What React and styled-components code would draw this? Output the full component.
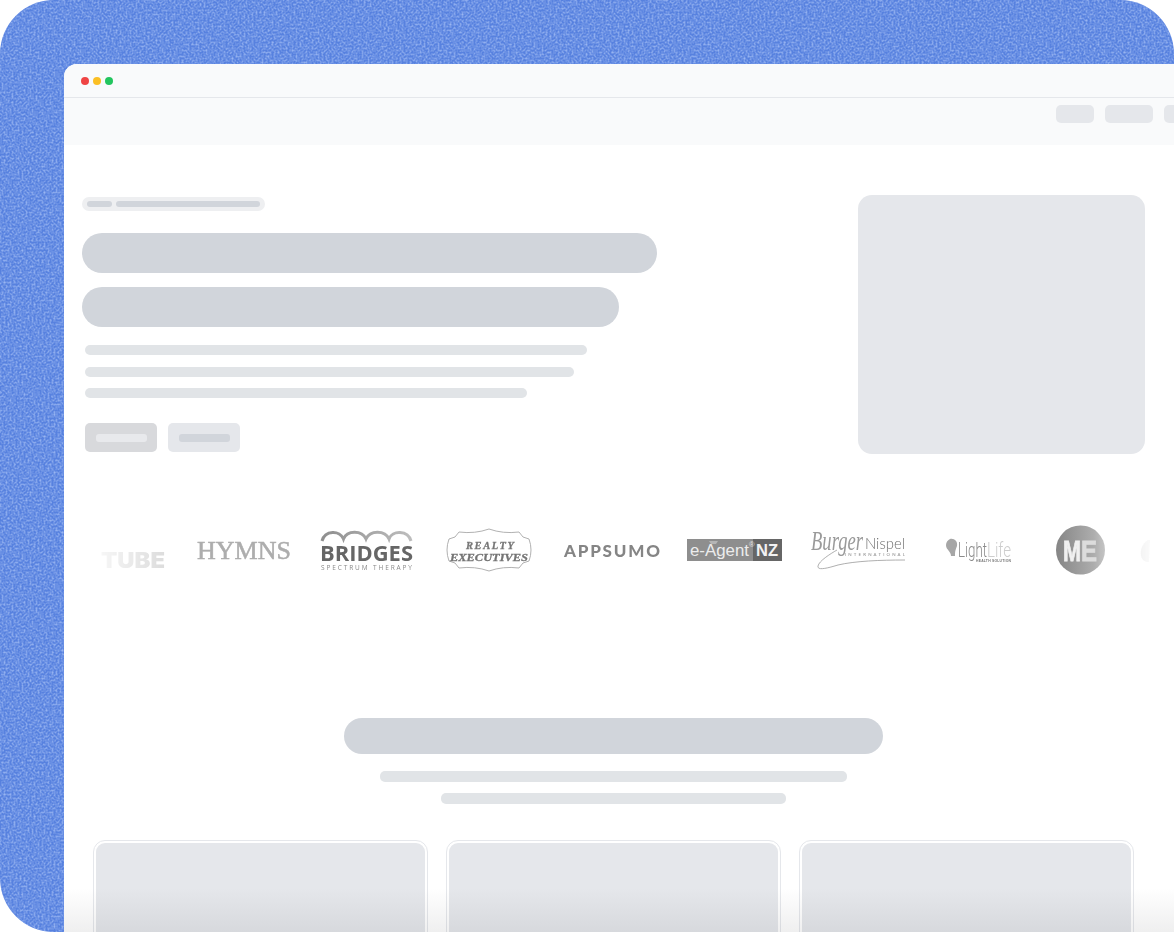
import React from "react";
import styled, { createGlobalStyle } from "styled-components";

const Global = createGlobalStyle`
  html, body { margin: 0; padding: 0; background: #fff; }
  body { font-family: "Liberation Sans", Arial, sans-serif; overflow: hidden; }
`;

const Stage = styled.div`
  position: relative;
  width: 1174px;
  height: 932px;
  padding: 64px 0 0 64px;
  box-sizing: border-box;
  border-radius: 54px 54px 0 54px;
  overflow: hidden;
  background: #5781df;
`;

const Noise = styled.svg`
  position: absolute;
  inset: 0;
  width: 100%;
  height: 100%;
`;

const Browser = styled.div`
  position: relative;
  height: 868px;
  background: #fff;
  border-top-left-radius: 13px;
  overflow: hidden;
`;

const TitleBar = styled.div`
  height: 34px;
  box-sizing: border-box;
  padding-left: 17px;
  display: flex;
  align-items: center;
  gap: 4px;
  background: #f9fafb;
  border-bottom: 1px solid #e5e7eb;
`;

const Dot = styled.span`
  width: 8px;
  height: 8px;
  border-radius: 50%;
  background: ${(p) => p.$color};
`;

const NavBar = styled.div`
  height: 47px;
  box-sizing: border-box;
  padding-top: 7px;
  display: flex;
  justify-content: flex-end;
  align-items: flex-start;
  gap: 11px;
  margin-right: -28px;
  background: #f9fafb;
`;

const NavButton = styled.div`
  width: ${(p) => p.$w}px;
  height: 18px;
  border-radius: 5px;
  background: #e5e7eb;
`;

const Hero = styled.section`
  display: flex;
  justify-content: space-between;
  padding: 50px 29px 0 18px;
`;

const HeroText = styled.div`
  width: 575px;
  padding-top: 2px;
`;

const Crumbs = styled.div`
  width: 183px;
  height: 14px;
  box-sizing: border-box;
  padding: 0 5px;
  display: flex;
  align-items: center;
  gap: 4px;
  border-radius: 7px;
  background: #eeeff1;
  margin-bottom: 22px;
`;

const CrumbBar = styled.div`
  height: 6px;
  border-radius: 3px;
  width: ${(p) => p.$w}px;
  background: #d1d5db;
`;

const Heading = styled.div`
  width: ${(p) => p.$w}px;
  height: 40px;
  border-radius: 20px;
  background: #d1d5db;
  margin-bottom: 14px;
`;

const Lines = styled.div`
  padding: 4px 0 0 3px;
  display: flex;
  flex-direction: column;
  gap: 11.5px;
`;

const TextLine = styled.div`
  width: ${(p) => p.$w}px;
  height: 10px;
  border-radius: 5px;
  background: #e1e4e7;
`;

const Actions = styled.div`
  display: flex;
  gap: 11px;
  margin: 25px 0 0 3px;
`;

const ActionButton = styled.div`
  width: 72px;
  height: 29px;
  border-radius: 5px;
  display: flex;
  align-items: center;
  justify-content: center;
  background: ${(p) => (p.$primary ? "#d8d9dc" : "#e5e7eb")};
`;

const ActionLabel = styled.div`
  width: 51px;
  height: 8px;
  border-radius: 3px;
  background: ${(p) => (p.$primary ? "#e8e9ec" : "#d1d5db")};
`;

const HeroImage = styled.div`
  width: 287.5px;
  height: 259px;
  border-radius: 14px;
  background: #e5e7eb;
`;

const LogoTrack = styled.div`
  display: flex;
  align-items: flex-start;
  height: 60px;
  margin-top: 66px;
  padding-left: 37px;
  overflow: hidden;
  filter: blur(0.4px);
  mask-image: linear-gradient(to right, transparent 15px, #000 135px, #000 1030px, transparent 1095px);
`;

const Logo = styled.svg`
  flex: none;
  overflow: visible;
  margin-left: ${(p) => p.$gap || 0}px;
`;

const Section = styled.section`
  width: 1099px;
  margin-top: 138px;
  display: flex;
  flex-direction: column;
  align-items: center;
`;

const SectionTitle = styled.div`
  width: 539px;
  height: 36px;
  border-radius: 18px;
  background: #d1d5db;
  margin-bottom: 17px;
`;

const SectionLine = styled.div`
  width: ${(p) => p.$w}px;
  height: 11px;
  border-radius: 5px;
  background: #e1e4e7;
  margin-bottom: 11px;
`;

const Cards = styled.div`
  display: grid;
  grid-template-columns: repeat(3, 334.5px);
  gap: 18.5px;
  margin: 25px 0.5px 0 0;
`;

const Card = styled.div`
  height: 200px;
  box-sizing: border-box;
  padding: 2px;
  border: 1px solid #e5e7eb;
  border-radius: 12px;
  background: #fff;
`;

const CardFill = styled.div`
  height: 100%;
  border-radius: 9px;
  background: #e5e7eb;
`;

const BottomFade = styled.div`
  position: absolute;
  left: 0;
  right: 0;
  bottom: 0;
  height: 44px;
  background: linear-gradient(to bottom, rgba(50, 50, 55, 0), rgba(50, 50, 55, 0.08));
`;

const sans = "'Liberation Sans', sans-serif";
const serif = "'Liberation Serif', serif";

const TubeLogo = ({ gap }) => (
  <Logo $gap={gap} width="64" height="60" viewBox="0 0 64 60">
    <text x="0" y="47.5" fontFamily="Inter, sans-serif" fontWeight="900" fontSize="21.5" textLength="64" lengthAdjust="spacingAndGlyphs" fill="#cfcfcf">TUBE</text>
  </Logo>
);

const HymnsLogo = ({ gap }) => (
  <Logo $gap={gap} width="94" height="60" viewBox="0 0 94 60">
    <text x="0" y="38.5" fontFamily={serif} fontSize="25" textLength="94" lengthAdjust="spacingAndGlyphs" fill="#adadad" stroke="#adadad" strokeWidth="0.5">HYMNS</text>
  </Logo>
);

const BridgesLogo = ({ gap }) => (
  <Logo $gap={gap} width="93" height="60" viewBox="0 0 93 60">
    <defs>
      <linearGradient id="arches" x1="0" x2="1" y1="0" y2="0">
        <stop offset="0" stopColor="#8f8f8f" />
        <stop offset="1" stopColor="#bdbdbd" />
      </linearGradient>
    </defs>
    <path d="M2 21 C5 10 20 10 23.5 19 C27 10 42 10 46 19 C50 10 65 10 69 19 C72 10 88 10 91 21" fill="none" stroke="url(#arches)" strokeWidth="3" />
    <text x="0" y="41" fontFamily="'Open Sans', sans-serif" fontWeight="700" fontSize="22" textLength="93" lengthAdjust="spacingAndGlyphs" fill="#666">BRIDGES</text>
    <text x="1" y="50" fontFamily="'Open Sans', sans-serif" fontSize="6.5" textLength="91" lengthAdjust="spacing" fill="#8a8a8a">SPECTRUM THERAPY</text>
  </Logo>
);

const RealtyLogo = ({ gap }) => (
  <Logo $gap={gap} width="88" height="60" viewBox="0 0 88 60">
    <path d="M14 12 Q30 14 44 9 Q58 14 74 12 L78 17 L84 19 Q88 30 84 41 L78 43 L74 48 Q58 46 44 51 Q30 46 14 48 L10 43 L4 41 Q0 30 4 19 L10 17 Z" fill="#fff" stroke="#a8a8a8" strokeWidth="0.9" />
    <text x="45" y="28.5" textAnchor="middle" fontFamily={serif} fontStyle="italic" fontWeight="700" fontSize="10.5" textLength="48" lengthAdjust="spacing" fill="#777" stroke="#777" strokeWidth="0.3">REALTY</text>
    <text x="44" y="40.5" textAnchor="middle" fontFamily={serif} fontStyle="italic" fontWeight="700" fontSize="11" textLength="78" lengthAdjust="spacingAndGlyphs" fill="#747474" stroke="#747474" strokeWidth="0.3">EXECUTIVES</text>
  </Logo>
);

const AppSumoLogo = ({ gap }) => (
  <Logo $gap={gap} width="96" height="60" viewBox="0 0 96 60">
    <text x="0" y="37" fontFamily="Lato, sans-serif" fontWeight="900" fontSize="17" textLength="96" lengthAdjust="spacing" fill="#858585">APPSUMO</text>
  </Logo>
);

const AgentLogo = ({ gap }) => (
  <Logo $gap={gap} width="95" height="60" viewBox="0 0 95 60">
    <rect x="0" y="19" width="66" height="22" fill="#8e8e8e" />
    <rect x="66" y="19" width="29" height="22" fill="#666" />
    <path d="M22 21 H31 L29 24 H24 Z" fill="#b5b5b5" />
    <text x="3" y="36" fontFamily={sans} fontSize="16.5" textLength="59" lengthAdjust="spacingAndGlyphs" fill="#ececec">e-Agent</text>
    <text x="62" y="27" fontFamily={sans} fontSize="7.5" fill="#e6e6e6">®</text>
    <text x="69" y="36" fontFamily={sans} fontWeight="700" fontSize="16" textLength="22" lengthAdjust="spacingAndGlyphs" fill="#f2f2f2">NZ</text>
  </Logo>
);

const BurgerLogo = ({ gap }) => (
  <Logo $gap={gap} width="96" height="60" viewBox="0 0 96 60">
    <text x="1" y="30" fontFamily={serif} fontStyle="italic" fontSize="28" textLength="52" lengthAdjust="spacingAndGlyphs" fill="#9a9a9a">Burger</text>
    <text x="55" y="29" fontFamily="Lato, sans-serif" fontWeight="300" fontSize="15.5" textLength="40" lengthAdjust="spacingAndGlyphs" fill="#6e6e6e">Nispel</text>
    <text x="35" y="36" fontFamily="Lato, sans-serif" fontSize="4.4" textLength="60" lengthAdjust="spacing" fill="#888">INTERNATIONAL</text>
    <path d="M95 40 C70 40 45 41 28 45 C18 48 7 51 8 46 C9 41 20 34 27 30" fill="none" stroke="#9a9a9a" strokeWidth="0.8" />
  </Logo>
);

const LightLifeLogo = ({ gap }) => (
  <Logo $gap={gap} width="67" height="60" viewBox="0 0 67 60">
    <path d="M5 19 C9 18 13 21 12 26 C11 29 10 30 10 36 H6 C6 31 1 30 1 25 C1 22 3 20 5 19 Z" fill="#a6a6a6" />
    <text x="13" y="37" fontFamily="Roboto, sans-serif" fontWeight="300" fontSize="20" textLength="29" lengthAdjust="spacingAndGlyphs" fill="#8a8a8a">Light</text>
    <text x="42" y="37" fontFamily="Roboto, sans-serif" fontWeight="300" fontSize="20" textLength="24" lengthAdjust="spacingAndGlyphs" fill="#cdcdcd">Life</text>
    <text x="31" y="42" fontFamily={sans} fontWeight="700" fontSize="3.4" textLength="35" lengthAdjust="spacing" fill="#777">HEALTH SOLUTION</text>
  </Logo>
);

const MeLogo = ({ gap }) => (
  <Logo $gap={gap} width="49" height="60" viewBox="0 0 49 60">
    <defs>
      <linearGradient id="meDisc" x1="0" x2="1" y1="0" y2="0">
        <stop offset="0" stopColor="#858585" />
        <stop offset="1" stopColor="#b9b9b9" />
      </linearGradient>
    </defs>
    <circle cx="24.5" cy="30" r="24.5" fill="url(#meDisc)" />
    <text x="7" y="41" fontFamily={sans} fontWeight="700" fontSize="30" textLength="18" lengthAdjust="spacingAndGlyphs" fill="#f0f0f0" stroke="#f0f0f0" strokeWidth="0.8">M</text>
    <text x="25" y="41" fontFamily={sans} fontWeight="700" fontSize="30" textLength="16" lengthAdjust="spacingAndGlyphs" fill="#dcdcdc" stroke="#dcdcdc" strokeWidth="0.8">E</text>
  </Logo>
);

const FadedLogo = ({ gap }) => (
  <Logo $gap={gap} width="24" height="60" viewBox="0 0 24 60">
    <path d="M8 20 C2 24 0 30 1 36 C2 40 5 42 9 42 L10 20 Z" fill="#d8d8d8" />
  </Logo>
);

export default function App() {
  return (
    <>
      <Global />
      <Stage>
        <Noise aria-hidden="true">
          <filter id="grain">
            <feTurbulence type="fractalNoise" baseFrequency="0.5" numOctaves="2" seed="4" />
            <feColorMatrix values="0 0 0 0 0.55  0 0 0 0 0.68  0 0 0 0 0.98  1.3 0 0 0 -0.48" />
          </filter>
          <rect width="100%" height="100%" filter="url(#grain)" />
        </Noise>
        <Browser>
          <TitleBar>
            <Dot $color="#ef4444" />
            <Dot $color="#fbbf24" />
            <Dot $color="#22c55e" />
          </TitleBar>
          <NavBar>
            <NavButton $w={38} />
            <NavButton $w={48} />
            <NavButton $w={38} />
          </NavBar>
          <Hero>
            <HeroText>
              <Crumbs>
                <CrumbBar $w={25} />
                <CrumbBar $w={144} />
              </Crumbs>
              <Heading $w={575} />
              <Heading $w={537} />
              <Lines>
                <TextLine $w={502} />
                <TextLine $w={489} />
                <TextLine $w={442} />
              </Lines>
              <Actions>
                <ActionButton $primary>
                  <ActionLabel $primary />
                </ActionButton>
                <ActionButton>
                  <ActionLabel />
                </ActionButton>
              </Actions>
            </HeroText>
            <HeroImage />
          </Hero>
          <LogoTrack>
            <TubeLogo />
            <HymnsLogo gap={32} />
            <BridgesLogo gap={29} />
            <RealtyLogo gap={32} />
            <AppSumoLogo gap={31} />
            <AgentLogo gap={27} />
            <BurgerLogo gap={28} />
            <LightLifeLogo gap={39} />
            <MeLogo gap={44} />
            <FadedLogo gap={35} />
          </LogoTrack>
          <Section>
            <SectionTitle />
            <SectionLine $w={467} />
            <SectionLine $w={345} />
            <Cards>
              <Card><CardFill /></Card>
              <Card><CardFill /></Card>
              <Card><CardFill /></Card>
            </Cards>
          </Section>
          <BottomFade />
        </Browser>
      </Stage>
    </>
  );
}
